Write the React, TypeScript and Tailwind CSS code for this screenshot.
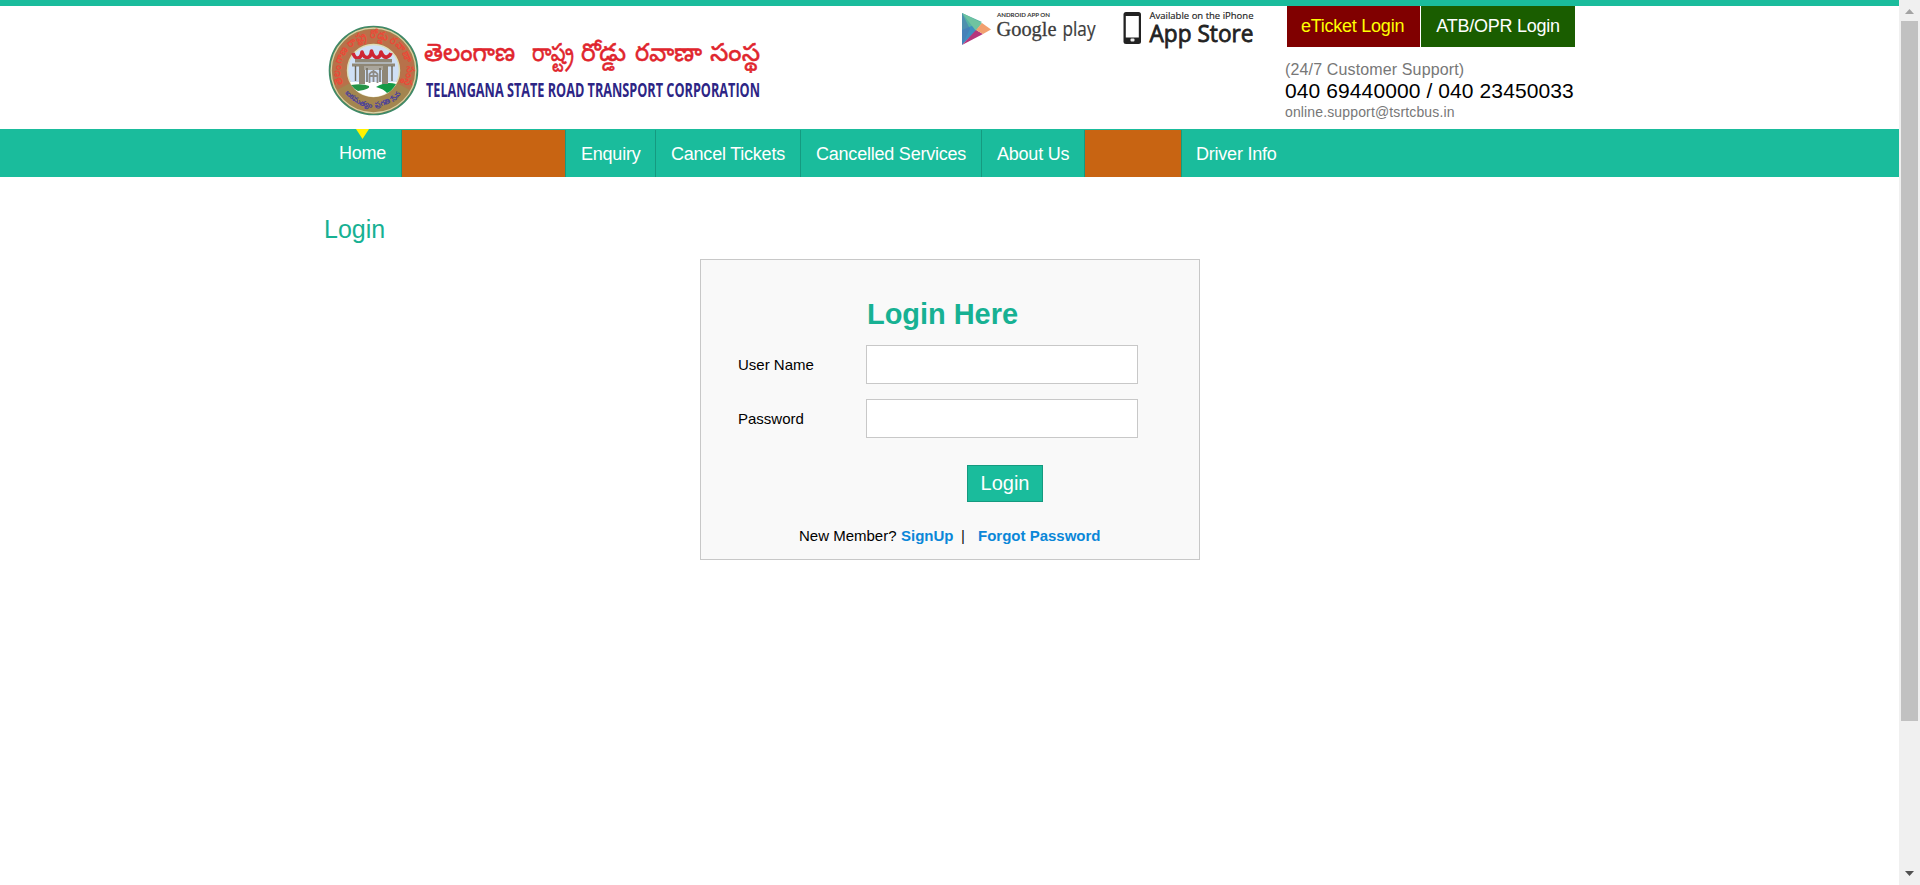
const sans = "font-['Liberation_Sans',Arial,sans-serif]";

function Emblem() {
  return (
    <svg width="91" height="92" viewBox="0 0 91 92" className="block shrink-0">
      <defs>
        <path id="ringTop" d="M15 59 A33 33 0 1 1 76 59" fill="none" />
        <path id="ringBottom" d="M14 63 A35.500 35.500 0 0 0 77 63" fill="none" />
      </defs>
      <circle cx="45.500" cy="45.500" r="44" fill="#a3854f" stroke="#3f8a68" strokeWidth="1.6" />
      <circle cx="45.500" cy="45.500" r="42.300" fill="none" stroke="#d9d3a8" strokeWidth="1.2" />
      <circle cx="45.500" cy="45.500" r="34" fill="none" stroke="#b8714a" strokeWidth="14" strokeDasharray="140 74" transform="rotate(152 45.5 45.5)" />
      <circle cx="45.500" cy="45.500" r="26" fill="#cfe0f6" stroke="#e0dcb4" strokeWidth="1.4" />
      <text fontSize="11" fontWeight="700" fill="#ea4a38">
        <textPath href="#ringTop" textLength="130" lengthAdjust="spacingAndGlyphs">తెలంగాణ రాష్ట్ర రోడ్డు రవాణా సంస్థ</textPath>
      </text>
      <text fontSize="7" fontWeight="700" fill="#4a3f9c">
        <textPath href="#ringBottom" startOffset="6" textLength="64" lengthAdjust="spacingAndGlyphs">ఐకమత్యం ప్రగతి సేవ</textPath>
      </text>
      <path d="M22 57 h47 a26 26 0 0 1 -47 0z" fill="#fff" />
      <path d="M48 62 q10 -6 20 -3 q-4 7 -9 9 q-3 -4 -11 -6z" fill="#129a46" />
      <path d="M23 60 q12 -2 18 1 q2 3 -11 5 q-4 -2 -7 -6z" fill="#259447" />
      <path d="M25 28 q2 6 5.500 5 q3 -1 3.500 -6 q2 6 5.500 5.500 q3.500 -0.500 4 -6.500 q2 6.500 5.500 6.500 q3.500 -0.500 4 -5.500 q2.500 6 6 5 q3 -1 4 -4" fill="none" stroke="#cf2534" strokeWidth="3.600" strokeLinejoin="round" />
      <g fill="#8f8776">
        <rect x="27" y="34" width="37" height="3.500" />
        <rect x="24" y="38.500" width="43" height="3" />
        <rect x="31" y="41" width="6" height="18" />
        <rect x="54" y="41" width="6" height="18" />
        <rect x="36" y="41" width="19" height="4" fill="#aaa69c" />
      </g>
      <path d="M27.500 41 v15 M64 41 v15 M39 43 v14 M52 43 v14" stroke="#6b6659" strokeWidth="1.4" />
      <path d="M41.500 58 V49 q4 -5 8 0 V58 M45.500 45 V57 M41 51 h9" fill="none" stroke="#8e8b86" strokeWidth="1.8" />
    </svg>
  );
}

function Brand() {
  return (
    <div className="mt-[19px] ml-[4px] flex w-[434px] items-start">
      <Emblem />
      <svg width="343" height="92" viewBox="419 25 343 92" className="block overflow-visible">
        <g fill="#e0252d" stroke="#e0252d" strokeWidth="0.5" fontSize="25" fontFamily="'Noto Sans Telugu','Noto Sans',sans-serif">
          <text x="424" y="61" textLength="91" lengthAdjust="spacingAndGlyphs">తెలంగాణ</text>
          <text x="532" y="61" textLength="42" lengthAdjust="spacingAndGlyphs">రాష్ట్ర</text>
          <text x="581" y="61" textLength="45" lengthAdjust="spacingAndGlyphs">రోడ్డు</text>
          <text x="635" y="61" textLength="67" lengthAdjust="spacingAndGlyphs">రవాణా</text>
          <text x="710" y="61" textLength="50" lengthAdjust="spacingAndGlyphs">సంస్థ</text>
        </g>
        <text x="426" y="97" textLength="334" lengthAdjust="spacingAndGlyphs" fontSize="19" fontWeight="700" fill="#2d2585" fontFamily="'Open Sans','Noto Sans',sans-serif">
          TELANGANA STATE ROAD TRANSPORT CORPORATION
        </text>
      </svg>
    </div>
  );
}

function GooglePlay() {
  return (
    <svg width="140" height="40" viewBox="0 0 140 40" className="block overflow-visible">
      <path d="M1 3 L1 35 L17 19z" fill="#3f8fc0" />
      <path d="M1 3 L1 20 L13 15 L21 12z" fill="#55b3a5" />
      <path d="M1 3 L21 13 L15 21z" fill="#6fc3a0" />
      <path d="M1 35 L15 20 L22 24z" fill="#b5367c" />
      <path d="M15 20 L21 13 L30 19.500 L22 24z" fill="#f2a06f" />
      <path d="M1 3 L1 35 L9 19z" fill="#4a78b4" opacity=".6" />
      <text x="36" y="7" textLength="53" lengthAdjust="spacingAndGlyphs" fontSize="5.400" fontWeight="700" fill="#333" fontFamily="Lato,sans-serif">ANDROID APP ON</text>
      <text x="35.500" y="26" textLength="60" lengthAdjust="spacingAndGlyphs" fontSize="21" fill="#3c3c3c" stroke="#3c3c3c" strokeWidth=".3" fontFamily="'Liberation Serif',serif">Google</text>
      <text x="101.500" y="26" textLength="33" lengthAdjust="spacingAndGlyphs" fontSize="20" fill="#3c3c3c" stroke="#3c3c3c" strokeWidth=".2" fontFamily="'Open Sans',sans-serif">play</text>
    </svg>
  );
}

function AppStore() {
  return (
    <svg width="132" height="40" viewBox="0 0 132 40" className="block overflow-visible">
      <rect x="0.500" y="2" width="17.500" height="32" rx="2.500" fill="#222" />
      <rect x="2.800" y="6" width="13" height="21.500" fill="#fff" />
      <rect x="7.500" y="28.500" width="4" height="3" rx="1" fill="#eee" />
      <text x="26.500" y="8.500" textLength="104" lengthAdjust="spacingAndGlyphs" fontSize="9" fill="#222" stroke="#222" strokeWidth=".15" fontFamily="'Open Sans',sans-serif">Available on the iPhone</text>
      <text x="26.500" y="31.500" textLength="104" lengthAdjust="spacingAndGlyphs" fontSize="24" fill="#222" stroke="#222" strokeWidth=".8" fontFamily="'Open Sans',sans-serif">App Store</text>
    </svg>
  );
}

function Header() {
  return (
    <header className="flex h-[129px] border-t-[6px] border-[#1abc9c] pl-[324px]">
      <Brand />
      <div className="ml-[199px] flex w-[325px] gap-[22px] pt-[4px]">
        <GooglePlay />
        <AppStore />
      </div>
      <div className="w-[300px]">
        <div className="ml-[1px] flex gap-px text-[18px] leading-[41px] tracking-[-0.25px]">
          <a className="h-[41px] w-[133px] bg-[#800000] pl-[14px] text-[#ffff00]">eTicket Login</a>
          <a className="h-[41px] w-[154px] bg-[#1a5d00] text-center text-white">ATB/OPR Login</a>
        </div>
        <div className="-ml-px pt-[13px] tracking-[0.1px] whitespace-nowrap text-[#777]">
          <p className="text-[16px] leading-[19px] tracking-[0.14px]">(24/7 Customer Support)</p>
          <p className="text-[21px] leading-[24px] text-black">040 69440000 / 040 23450033</p>
          <p className="text-[14px] leading-[18px] tracking-[0.14px]">online.support@tsrtcbus.in</p>
        </div>
      </div>
    </header>
  );
}

const divider = "h-[47px] border-r border-[#159a80] pl-[15px] leading-[48px]";

function Nav() {
  return (
    <nav className="flex h-[48px] bg-[#1abc9c] pt-px pl-[324px] text-[18px] tracking-[-0.22px] whitespace-nowrap text-white">
      <a className={`${divider} relative w-[78px]`}>
        <svg width="14" height="10" viewBox="0 0 14 10" className="absolute -top-px left-[32px]">
          <path d="M0 0 H13 L6.500 10z" fill="#fff200" />
        </svg>
        <span className="block leading-[46px]">Home</span>
      </a>
      <a className={`${divider} w-[164px] bg-[#c86412]`} />
      <a className={`${divider} w-[90px]`}>Enquiry</a>
      <a className={`${divider} w-[145px]`}>Cancel Tickets</a>
      <a className={`${divider} w-[181px]`}>Cancelled Services</a>
      <a className={`${divider} w-[103px]`}>About Us</a>
      <a className={`${divider} w-[97px] bg-[#c86412]`} />
      <a className="w-[110px] pl-[14px] leading-[48px]">Driver Info</a>
    </nav>
  );
}

function Field({ label, type }: { label: string; type: string }) {
  return (
    <label className="flex h-[39px] items-center text-[15px]">
      <span className="w-[128px] pt-[2px]">{label}</span>
      <input type={type} className="h-[39px] w-[272px] border border-[#c8c8c8] bg-white px-2 outline-none" />
    </label>
  );
}

function LoginCard() {
  return (
    <form className="ml-[376px] h-[301px] w-[500px] border border-[#c8c8c8] bg-[#f9f9f9] pl-[37px]">
      <h2 className="ml-[129px] pt-[36px] text-[29px] leading-[36px] font-bold tracking-[-0.05px] text-[#17b193]">Login Here</h2>
      <div className="mt-[13px] flex flex-col gap-[15px]">
        <Field label="User Name" type="text" />
        <Field label="Password" type="password" />
      </div>
      <button type="button" className="mt-[27px] ml-[229px] block h-[37px] w-[76px] border border-[#159a80] bg-[#1abc9c] text-[20px] leading-[35px] text-white">
        Login
      </button>
      <p className="mt-[24px] ml-[61px] flex text-[15px] leading-[20px] whitespace-nowrap">
        <span className="w-[102px]">New Member?</span>
        <a className="w-[60px] font-bold text-[#0a87d8]">SignUp</a>
        <span className="w-[17px] text-[#111]">|</span>
        <a className="font-bold text-[#0a87d8]">Forgot Password</a>
      </p>
    </form>
  );
}

function ScrollBar() {
  return (
    <aside className="flex w-[21px] flex-col items-center bg-[#f0f0f0]">
      <svg width="9" height="5" viewBox="0 0 9 5" className="mt-[9px] shrink-0">
        <path d="M0 5 L4.500 0 L9 5z" fill="#a3a3a3" />
      </svg>
      <div className="mt-[7px] h-[700px] w-[17px] shrink-0 bg-[#c1c1c1]" />
      <svg width="9" height="5" viewBox="0 0 9 5" className="mt-auto mb-[9px]">
        <path d="M0 0 H9 L4.500 5z" fill="#505050" />
      </svg>
    </aside>
  );
}

export default function App() {
  return (
    <div className={`${sans} flex h-[885px] w-[1920px] overflow-hidden bg-white text-black`}>
      <div className="w-[1899px] shrink-0">
        <Header />
        <Nav />
        <main className="pl-[324px]">
          <h1 className="pt-[37px] text-[25px] leading-[30px] text-[#17b193]">Login</h1>
          <div className="pt-[15px]">
            <LoginCard />
          </div>
        </main>
      </div>
      <ScrollBar />
    </div>
  );
}
